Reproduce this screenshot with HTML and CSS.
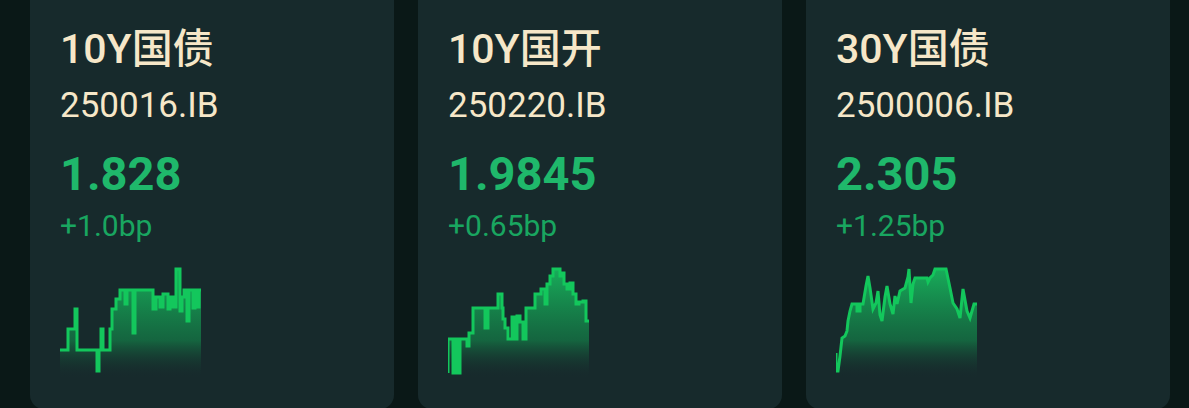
FILE: index.html
```html
<!DOCTYPE html>
<html lang="zh-CN">
<head>
<meta charset="utf-8">
<title>Bond quotes</title>
<link rel="stylesheet" href="styles.css">
</head>
<body>
<div class="row">
  <section class="card">
    <div class="title">10Y国债</div>
    <div class="code">250016.IB</div>
    <div class="price">1.828</div>
    <div class="change">+1.0bp</div>
    <svg class="spark" width="142" height="112" viewBox="0 0 142 112">
      <defs>
        <linearGradient id="g1" x1="0" y1="0" x2="0" y2="1">
          <stop offset="0" stop-color="#18c462" stop-opacity="0.85"/>
          <stop offset="0.65" stop-color="#13954f" stop-opacity="0.55"/>
          <stop offset="1" stop-color="#172a2c" stop-opacity="0"/>
        </linearGradient>
      </defs>
      <path class="area" fill="url(#g1)" d="M0,83 H8 V62 H15 V42 H17 V83 H37 V104 H39 V83 H41 V62 H43 V83 H50 V62 H52 V42 H56 V32 H60 V23 H65 V37 H67 V23 H73 V66 H75 V23 H93 V42 H96 V30 H100 V40 H103 V27 H108 V42 H110 V30 H113 V40 H116 V2 H120 V44 H122 V30 H124 V23 H127 V54 H129 V23 H133 V41 H135 V23 H137 V40 H139 V23 H141 V112 H0 Z"/>
      <path class="line" d="M0,83 H8 V62 H15 V42 H17 V83 H37 V104 H39 V83 H41 V62 H43 V83 H50 V62 H52 V42 H56 V32 H60 V23 H65 V37 H67 V23 H73 V66 H75 V23 H93 V42 H96 V30 H100 V40 H103 V27 H108 V42 H110 V30 H113 V40 H116 V2 H120 V44 H122 V30 H124 V23 H127 V54 H129 V23 H133 V41 H135 V23 H137 V40 H139 V23 H141"/>
    </svg>
  </section>
  <section class="card">
    <div class="title">10Y国开</div>
    <div class="code">250220.IB</div>
    <div class="price">1.9845</div>
    <div class="change">+0.65bp</div>
    <svg class="spark" width="142" height="112" viewBox="0 0 142 112">
      <defs>
        <linearGradient id="g2" x1="0" y1="0" x2="0" y2="1">
          <stop offset="0" stop-color="#18c462" stop-opacity="0.85"/>
          <stop offset="0.65" stop-color="#13954f" stop-opacity="0.55"/>
          <stop offset="1" stop-color="#172a2c" stop-opacity="0"/>
        </linearGradient>
      </defs>
      <path class="area" fill="url(#g2)" d="M0,106 V72 H5 V106 H7 V72 H10 V106 H12 V72 H19 V79 H21 V66 H25 V41 H37 V61 H40 V41 H50 V27 H54 V41 H55 V52 H57 V61 H60 V72 H64 V50 H67 V72 H69 V49 H72 V55 H75 V72 H78 V41 H87 V27 H93 V22 H97 V37 H99 V17 H102 V9 H105 V2 H112 V9 H114 V6 H116 V17 H119 V22 H122 V16 H125 V27 H128 V37 H131 V35 H135 V34 H138 V54 H141 V112 H0 Z"/>
      <path class="line" d="M0,106 V72 H5 V106 H7 V72 H10 V106 H12 V72 H19 V79 H21 V66 H25 V41 H37 V61 H40 V41 H50 V27 H54 V41 H55 V52 H57 V61 H60 V72 H64 V50 H67 V72 H69 V49 H72 V55 H75 V72 H78 V41 H87 V27 H93 V22 H97 V37 H99 V17 H102 V9 H105 V2 H112 V9 H114 V6 H116 V17 H119 V22 H122 V16 H125 V27 H128 V37 H131 V35 H135 V34 H138 V54 H141"/>
    </svg>
  </section>
  <section class="card">
    <div class="title">30Y国债</div>
    <div class="code">2500006.IB</div>
    <div class="price">2.305</div>
    <div class="change">+1.25bp</div>
    <svg class="spark" width="142" height="112" viewBox="0 0 142 112">
      <defs>
        <linearGradient id="g3" x1="0" y1="0" x2="0" y2="1">
          <stop offset="0" stop-color="#18c462" stop-opacity="0.85"/>
          <stop offset="0.65" stop-color="#13954f" stop-opacity="0.55"/>
          <stop offset="1" stop-color="#172a2c" stop-opacity="0"/>
        </linearGradient>
      </defs>
      <path class="area" fill="url(#g3)" d="M0,86 V104 H2 L4,89 L6,71 L9,69 L11,64 L12,54 L14,44 L16,37 H21 V44 H24 V37 H27 L30,19 L32,9 L34,21 L37,42 L40,36 L42,24 L44,48 L46,54 L49,30 L51,19 L54,37 L57,47 L59,29 L61,37 L64,24 L69,21 L72,10 L73,2 L75,36 L77,17 L79,11 H91 L92,15 L94,11 L97,8 L99,2 H110 L114,21 L117,36 L121,42 L124,51 L127,22 L131,44 L134,51 L138,37 H141 V112 H0 Z"/>
      <path class="line" d="M0,86 V104 H2 L4,89 L6,71 L9,69 L11,64 L12,54 L14,44 L16,37 H21 V44 H24 V37 H27 L30,19 L32,9 L34,21 L37,42 L40,36 L42,24 L44,48 L46,54 L49,30 L51,19 L54,37 L57,47 L59,29 L61,37 L64,24 L69,21 L72,10 L73,2 L75,36 L77,17 L79,11 H91 L92,15 L94,11 L97,8 L99,2 H110 L114,21 L117,36 L121,42 L124,51 L127,22 L131,44 L134,51 L138,37 H141"/>
    </svg>
  </section>
</div>
</body>
</html>
```

FILE: styles.css
```css
html, body {
  margin: 0;
  padding: 0;
  background: #0a1817;
  overflow: hidden;
}

body {
  font-family: Roboto, "Noto Sans CJK SC", sans-serif;
}

.row {
  display: flex;
  gap: 24px;
  padding-left: 30px;
}

.card {
  width: 364px;
  height: 409px;
  box-sizing: border-box;
  padding: 25px 30px 0;
  background: #172a2c;
  border-radius: 0 0 14px 14px;
  display: flex;
  flex-direction: column;
  align-items: flex-start;
}

.title {
  font-size: 41px;
  line-height: 48px;
  font-weight: 500;
  color: #f6e7c8;
}

.code {
  margin-top: 12px;
  font-size: 35px;
  line-height: 42px;
  font-weight: 400;
  color: #f6e7c8;
}

.price {
  margin-top: 19px;
  font-size: 47px;
  line-height: 56px;
  font-weight: 700;
  color: #1fb86b;
}

.change {
  margin-top: 6px;
  font-size: 30px;
  line-height: 36px;
  font-weight: 400;
  color: #19a660;
}

.spark {
  display: block;
  margin-top: 23px;
}

.spark .line {
  fill: none;
  stroke: #13c75c;
  stroke-width: 3;
  stroke-linejoin: miter;
}
```
